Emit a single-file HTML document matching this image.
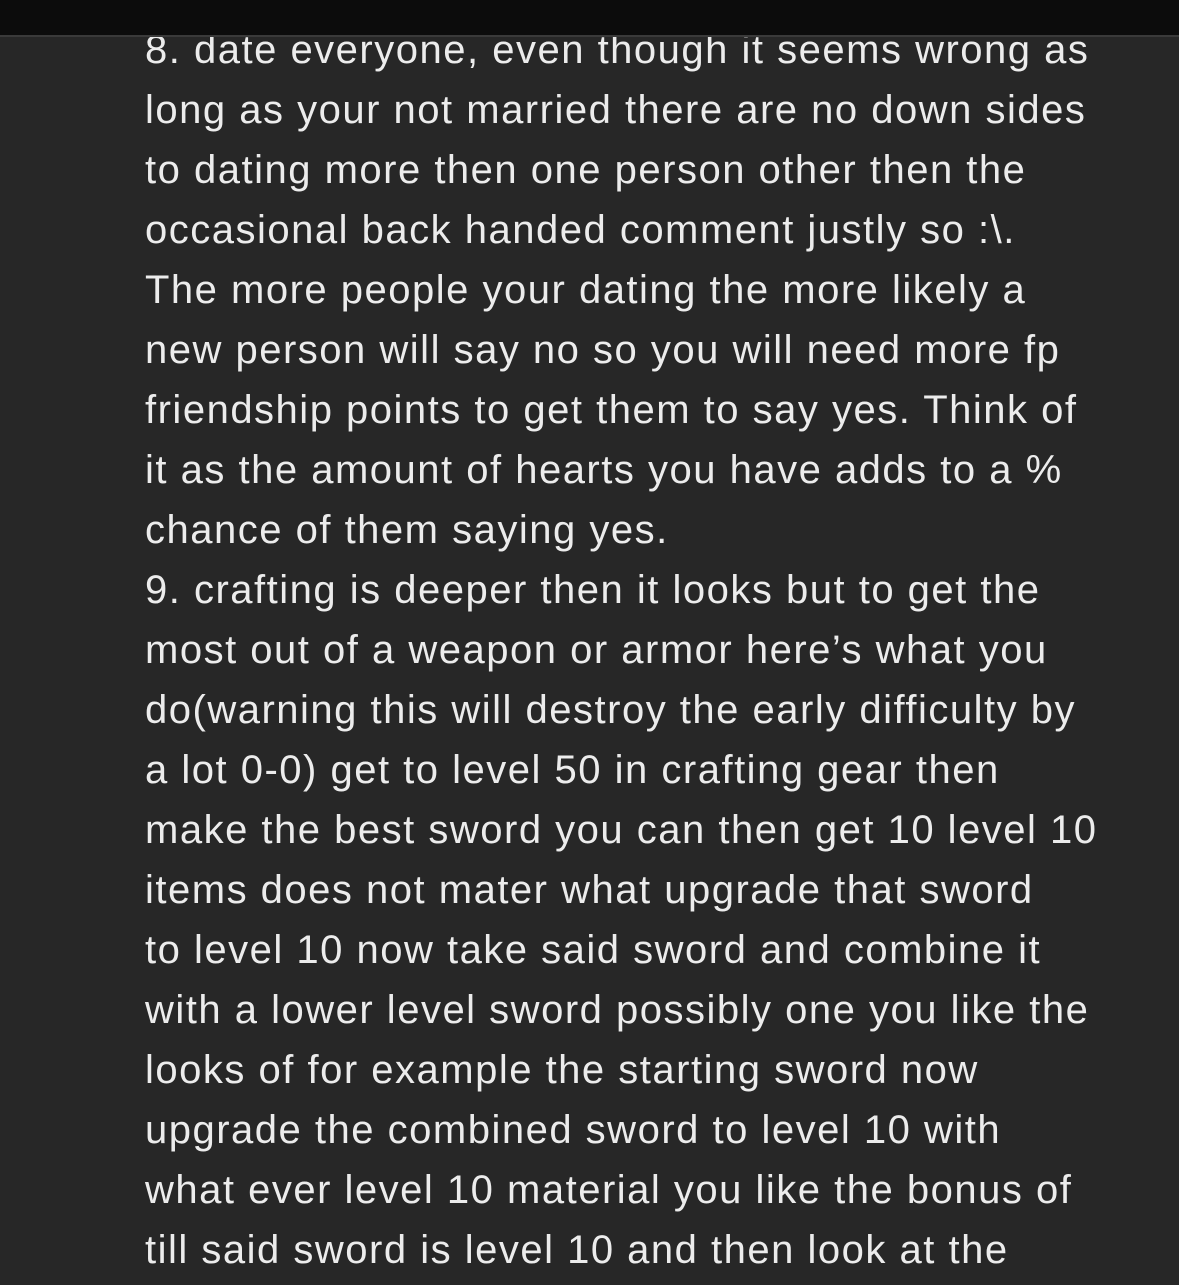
<!DOCTYPE html>
<html><head><meta charset="utf-8"><style>
html,body{margin:0;padding:0;}
body{width:1179px;height:1285px;background:#272727;overflow:hidden;position:relative;font-family:"Liberation Sans",sans-serif;}
.bar{position:absolute;left:0;top:0;width:1179px;height:35px;background:#0c0c0c;border-bottom:2px solid #3a3a3a;z-index:2;}
.t{position:absolute;left:145px;top:20px;color:#ececec;font-size:40px;line-height:60px;letter-spacing:1.5px;white-space:nowrap;}
</style></head><body>
<div class="bar"></div>
<div class="t">
<div>8. date everyone, even though it seems wrong as</div>
<div>long as your not married there are no down sides</div>
<div>to dating more then one person other then the</div>
<div>occasional back handed comment justly so :\.</div>
<div>The more people your dating the more likely a</div>
<div>new person will say no so you will need more fp</div>
<div>friendship points to get them to say yes. Think of</div>
<div>it as the amount of hearts you have adds to a %</div>
<div>chance of them saying yes.</div>
<div>9. crafting is deeper then it looks but to get the</div>
<div>most out of a weapon or armor here’s what you</div>
<div>do(warning this will destroy the early difficulty by</div>
<div>a lot 0-0) get to level 50 in crafting gear then</div>
<div>make the best sword you can then get 10 level 10</div>
<div>items does not mater what upgrade that sword</div>
<div>to level 10 now take said sword and combine it</div>
<div>with a lower level sword possibly one you like the</div>
<div>looks of for example the starting sword now</div>
<div>upgrade the combined sword to level 10 with</div>
<div>what ever level 10 material you like the bonus of</div>
<div>till said sword is level 10 and then look at the</div>
</div>
</body></html>
